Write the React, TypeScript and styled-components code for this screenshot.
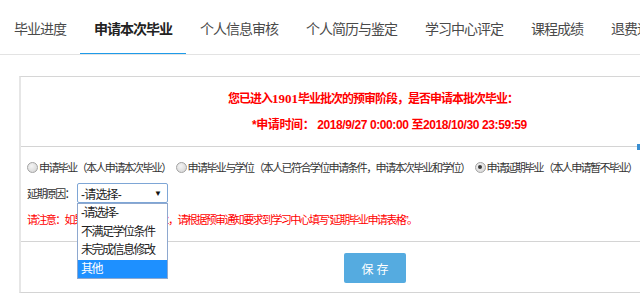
import React, { FC } from 'react';
import styled, { createGlobalStyle } from 'styled-components';

// Global page reset
const GlobalStyle = createGlobalStyle`
	html, body {
		margin: 0;
		padding: 0;
		background: #ffffff;
		overflow: hidden;
	}
	body {
		font-family: "Liberation Sans", "Noto Sans CJK SC", sans-serif;
		color: #333333;
	}
`;

const Page = styled.div`
	width: 640px;
	height: 299px;
	position: relative;
`;

// Tab bar on top
const TabBar = styled.div`
	display: flex;
	height: 54px;
	border-bottom: 1px solid #e3e3e3;
	white-space: nowrap;
	overflow: hidden;
`;

const Tab = styled.div<{ active?: boolean }>`
	flex: none;
	height: 55px;
	box-sizing: border-box;
	padding: 6px 14px 0;
	line-height: 47px;
	font-size: 14px;
	letter-spacing: -1px;
	color: ${(props) => (props.active ? '#222222' : '#4a4a4a')};
	font-weight: ${(props) => (props.active ? 'bold' : 'normal')};
	border-bottom: 2px solid ${(props) => (props.active ? '#1e9be9' : 'transparent')};
	margin-bottom: -1px;
`;

// Main panel
const Panel = styled.div`
	margin: 21px 0 0 19px;
	border-left: 2px solid #e6e6e6;
	border-top: 1px solid #d6d6d6;
	border-bottom: 1px solid #d4d4d4;
`;

const Section = styled.div<{ last?: boolean }>`
	position: relative;
	border-bottom: ${(props) => (props.last ? 'none' : '1px solid #d4d4d4')};
`;

const NoticeSection = styled(Section)`
	height: 70px;
	box-sizing: border-box;
	padding-top: 9px;

	&::after {
		content: '';
		position: absolute;
		right: 0;
		bottom: -4px;
		width: 3px;
		height: 6px;
		background: #3a8fd2;
	}
`;

const RedLine = styled.div<{ indent: number; spacing: number }>`
	padding-left: ${(props) => props.indent}px;
	line-height: 26px;
	font-size: 12px;
	font-weight: bold;
	color: #ff0000;
	letter-spacing: ${(props) => props.spacing}px;
	white-space: nowrap;
`;

const SerifNum = styled.span`
	font-family: "Liberation Serif", "Noto Sans CJK SC", serif;
	font-size: 13px;
	letter-spacing: 0;
`;

const FormSection = styled(Section)`
	height: 95px;
	box-sizing: border-box;
	padding: 10px 0 0 6px;
	font-size: 11px;
	letter-spacing: -1.6px;
`;

const RadioRow = styled.div`
	display: flex;
	align-items: center;
	height: 20px;
	white-space: nowrap;
`;

const RadioOption = styled.label`
	display: flex;
	align-items: center;
	margin-right: 5px;
	color: #333333;
`;

const RadioDot = styled.span<{ checked?: boolean }>`
	position: relative;
	flex: none;
	width: 9px;
	height: 9px;
	border-radius: 50%;
	border: 1px solid #a3a3a3;
	background: radial-gradient(circle at 40% 35%, #f4f4f4 0%, #d2d2d2 100%);
	margin-right: 1px;

	&::after {
		content: '';
		display: ${(props) => (props.checked ? 'block' : 'none')};
		position: absolute;
		left: 2.5px;
		top: 2.5px;
		width: 4px;
		height: 4px;
		border-radius: 50%;
		background: #3a3a3a;
	}
`;

const SelectRow = styled.div`
	display: flex;
	align-items: center;
	height: 20px;
	margin-top: 6px;
	color: #333333;
`;

const SelectBox = styled.div`
	position: relative;
	display: flex;
	align-items: center;
	justify-content: space-between;
	width: 91px;
	height: 20px;
	box-sizing: border-box;
	margin-left: 3px;
	padding: 0 5px 0 3px;
	border: 1px solid #7ea6d6;
	border-radius: 2px;
	font-size: 12px;
	letter-spacing: -0.8px;
	color: #222222;
	background: #ffffff;
`;

const Caret = styled.span`
	font-size: 8px;
	letter-spacing: 0;
	color: #111111;
`;

const DropList = styled.div`
	position: absolute;
	left: -1px;
	top: 19px;
	width: 91px;
	box-sizing: border-box;
	border: 1px solid #8ea8cf;
	background: #ffffff;
	z-index: 5;
`;

const DropOption = styled.div<{ selected?: boolean }>`
	height: 18.5px;
	line-height: 18.5px;
	padding-left: 3px;
	font-size: 12px;
	letter-spacing: -1.5px;
	white-space: nowrap;
	color: ${(props) => (props.selected ? '#ffffff' : '#222222')};
	background: ${(props) => (props.selected ? '#1e90ff' : 'transparent')};
`;

const Warning = styled.div`
	margin-top: 7px;
	line-height: 20px;
	color: #ff0000;
	white-space: nowrap;
`;

const ActionSection = styled(Section)`
	height: 50px;
	box-sizing: border-box;
	padding: 11px 0 0 323px;
`;

const SaveButton = styled.button`
	width: 62px;
	height: 30px;
	border: none;
	border-radius: 2px;
	background: #55abe0;
	color: #ffffff;
	font-family: "Liberation Sans", "Noto Sans CJK SC", sans-serif;
	font-size: 12px;
	letter-spacing: 3px;
	padding: 0 0 0 3px;
	cursor: pointer;
`;

const tabs = ['毕业进度', '申请本次毕业', '个人信息审核', '个人简历与鉴定', '学习中心评定', '课程成绩', '退费退学'];
const reasons = ['-请选择-', '不满足学位条件', '未完成信息修改', '其他'];

const App: FC = () => {
    return (
        <Page>
            <GlobalStyle />
            <TabBar>
                {tabs.map((t, i) => (
                    <Tab key={t} active={i === 1}>
                        {t}
                    </Tab>
                ))}
            </TabBar>

            <Panel>
                {/* batch notice */}
                <NoticeSection>
                    <RedLine indent={207} spacing={-1}>
                        您已进入<SerifNum>1901</SerifNum>毕业批次的预审阶段，是否申请本批次毕业：
                    </RedLine>
                    <RedLine indent={231} spacing={-0.4}>
                        *申请时间： 2018/9/27 0:00:00 至2018/10/30 23:59:59
                    </RedLine>
                </NoticeSection>

                {/* application form */}
                <FormSection>
                    <RadioRow>
                        <RadioOption>
                            <RadioDot />
                            申请毕业（本人申请本次毕业）
                        </RadioOption>
                        <RadioOption>
                            <RadioDot />
                            申请毕业与学位（本人已符合学位申请条件，申请本次毕业和学位）
                        </RadioOption>
                        <RadioOption>
                            <RadioDot checked />
                            申请延期毕业（本人申请暂不毕业）
                        </RadioOption>
                    </RadioRow>
                    <SelectRow>
                        延期原因：
                        <SelectBox>
                            <span>-请选择-</span>
                            <Caret>▼</Caret>
                            <DropList>
                                {reasons.map((r, i) => (
                                    <DropOption key={r} selected={i === reasons.length - 1}>
                                        {r}
                                    </DropOption>
                                ))}
                            </DropList>
                        </SelectBox>
                    </SelectRow>
                    <Warning>
                        请注意：如果您需要申请延期毕业，请根据预审通知要求到学习中心填写“延期毕业申请表格”。
                    </Warning>
                </FormSection>

                <ActionSection last>
                    <SaveButton>保存</SaveButton>
                </ActionSection>
            </Panel>
        </Page>
    );
};

export default App;
